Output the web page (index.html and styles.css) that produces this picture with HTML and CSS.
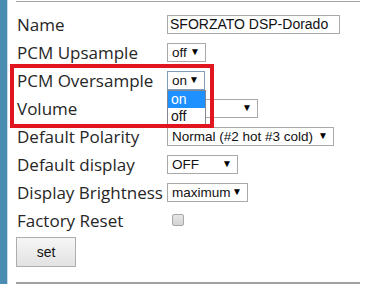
FILE: index.html
```html
<!DOCTYPE html>
<html>
<head>
<meta charset="utf-8">
<link rel="stylesheet" href="styles.css">
</head>
<body>
<div class="page">
  <div class="bar"></div>
  <div class="content">
    <form class="form">
      <div class="row">
        <span class="label">Name</span>
        <span class="field"><span class="text-input">SFORZATO DSP-Dorado</span></span>
      </div>
      <div class="row">
        <span class="label">PCM Upsample</span>
        <span class="field"><span class="sel w-off">off<span class="arr">▼</span></span></span>
      </div>
      <div class="row">
        <span class="label">PCM Oversample</span>
        <span class="field anchor">
          <span class="sel w-on focus">on<span class="arr">▼</span></span>
          <span class="dropdown">
            <span class="opt active">on</span>
            <span class="opt">off</span>
          </span>
        </span>
      </div>
      <div class="row">
        <span class="label">Volume</span>
        <span class="field"><span class="sel w-vol"><span class="arr">▼</span></span></span>
      </div>
      <div class="row">
        <span class="label">Default Polarity</span>
        <span class="field"><span class="sel w-pol">Normal (#2 hot #3 cold)<span class="arr">▼</span></span></span>
      </div>
      <div class="row">
        <span class="label">Default display</span>
        <span class="field"><span class="sel w-disp">OFF<span class="arr">▼</span></span></span>
      </div>
      <div class="row">
        <span class="label">Display Brightness</span>
        <span class="field"><span class="sel w-bri">maximum<span class="arr">▼</span></span></span>
      </div>
      <div class="row">
        <span class="label">Factory Reset</span>
        <span class="field"><span class="checkbox"></span></span>
      </div>
      <div class="actions">
        <span class="button">set</span>
      </div>
    </form>
    <div class="highlight"></div>
  </div>
</div>
</body>
</html>
```
FILE: styles.css
```css
html, body {
  margin: 0;
  padding: 0;
  background: #fff;
}
.page {
  display: flex;
  width: 367px;
  height: 284px;
  overflow: hidden;
}
.bar {
  width: 7px;
  background: #4a8cb2;
  border-right: 1px solid #c9dbe6;
  flex: none;
}
.content {
  position: relative;
  margin-left: 8px;
  width: 344px;
  border-top: 1px solid #a4a4a4;
  border-bottom: 2px solid #a0a0a0;
  margin-top: 1px;
  height: 280px;
}
.form {
  padding-top: 8px;
}
.row {
  display: grid;
  grid-template-columns: 151px auto;
  height: 28px;
  align-items: center;
}
.label {
  padding-left: 1px;
  font-family: "Open Sans", sans-serif;
  font-size: 17px;
  color: #262626;
}
.field {
  display: flex;
  align-items: center;
}
.anchor {
  position: relative;
}
.text-input {
  box-sizing: border-box;
  width: 173px;
  height: 19px;
  border: 1px solid #a9a9a9;
  font-family: "Liberation Sans", Arial, sans-serif;
  font-size: 14px;
  line-height: 17px;
  padding-left: 2px;
  color: #111;
}
.sel {
  position: relative;
  box-sizing: border-box;
  height: 19px;
  border: 1px solid #a9a9a9;
  font-family: "Liberation Sans", Arial, sans-serif;
  font-size: 13.5px;
  line-height: 17px;
  padding-left: 4px;
  color: #111;
  background: #fff;
}
.sel.focus {
  border-color: #7f9db9;
}
.arr {
  position: absolute;
  right: 5px;
  top: -1px;
  font-size: 10px;
  line-height: 17px;
  color: #000;
}
.w-off { width: 39px; }
.w-on { width: 38px; }
.w-vol { width: 91px; }
.w-pol { width: 167px; }
.w-disp { width: 71px; }
.w-bri { width: 81px; }
.dropdown {
  position: absolute;
  left: 0;
  top: 19px;
  width: 39px;
  box-sizing: border-box;
  border: 1px solid #828790;
  background: #fff;
  display: flex;
  flex-direction: column;
  z-index: 2;
}
.opt {
  height: 17px;
  line-height: 17px;
  padding-left: 3px;
  font-family: "Liberation Sans", Arial, sans-serif;
  font-size: 14px;
  color: #111;
}
.opt.active {
  background: #1e90ff;
  color: #fff;
}
.checkbox {
  margin-left: 5px;
  width: 10px;
  height: 10px;
  border: 1px solid #a8a8a8;
  border-radius: 2px;
  background: linear-gradient(#e6e6e6, #d2d2d2);
}
.actions {
  padding-top: 3px;
}
.button {
  display: inline-flex;
  align-items: center;
  justify-content: center;
  box-sizing: border-box;
  width: 60px;
  height: 30px;
  border: 1px solid #adadad;
  background: linear-gradient(#f6f6f6, #e2e2e2);
  font-family: "Liberation Sans", Arial, sans-serif;
  font-size: 14px;
  color: #111;
}
.highlight {
  position: absolute;
  left: -6px;
  top: 62px;
  width: 204px;
  height: 64px;
  box-sizing: border-box;
  border: 4px solid #e0151f;
  z-index: 3;
  pointer-events: none;
}
```
